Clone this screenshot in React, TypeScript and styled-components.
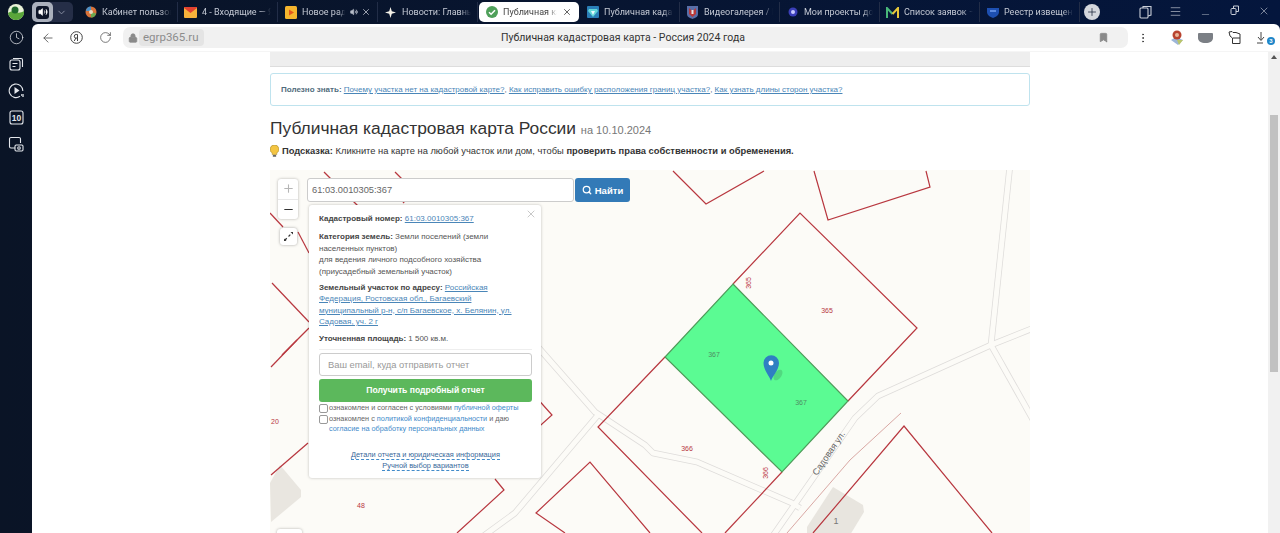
import React from 'react';
import styled, { createGlobalStyle } from 'styled-components';
import { ArrowLeft, Bookmark, ChevronDown, Clock, EllipsisVertical, Menu, Minus, Plus, RotateCw, Search, Volume2, X, Lock } from 'lucide-react';

const GlobalStyle = createGlobalStyle`
  html, body { margin: 0; padding: 0; height: 533px; overflow: hidden; background: #0a1426; }
  body { font-family: "Liberation Sans", Arial, sans-serif; }
  * { box-sizing: border-box; }
`;

// Иконки вкладок
const FavCabinet = () => (
  <svg width="12" height="12" viewBox="0 0 12 12">
    <circle cx="6" cy="6" r="5.5" fill="#d9733a" />
    <path d="M1 5a5 5 0 0 1 5-4.5V5z" fill="#4a90c8" />
    <path d="M6 11.5a5 5 0 0 0 5-4L6 6z" fill="#6aa84f" />
    <circle cx="6" cy="6" r="2" fill="#e8d8c0" />
  </svg>
);
const FavMail = () => (
  <svg width="13" height="11" viewBox="0 0 13 11">
    <rect width="13" height="11" rx="1" fill="#f7b23b" />
    <path d="M0 1l6.5 5L13 1V0H0z" fill="#e2412f" />
  </svg>
);
const FavRadio = () => (
  <svg width="12" height="13" viewBox="0 0 12 13">
    <rect width="12" height="13" rx="1.5" fill="#f5b52e" />
    <path d="M4 3.5l5 3-5 3z" fill="#e2561c" />
  </svg>
);
const FavSpark = () => (
  <svg width="11" height="11" viewBox="0 0 11 11">
    <path d="M5.5 0l1.3 4.2L11 5.5 6.8 6.8 5.5 11 4.2 6.8 0 5.5l4.2-1.3z" fill="#f4f1e8" />
  </svg>
);
const FavOk = () => (
  <svg width="12" height="12" viewBox="0 0 12 12">
    <circle cx="6" cy="6" r="6" fill="#4fa05a" />
    <path d="M3 6.2l2.1 2.1L9 4.2" fill="none" stroke="#fff" strokeWidth="1.5" />
  </svg>
);
const FavGem = () => (
  <svg width="12" height="12" viewBox="0 0 12 12">
    <rect width="12" height="12" rx="1" fill="#2a7fb8" />
    <path d="M2 3h8l1 2-5 6-5-6z" fill="#62d6d8" />
    <path d="M4 5h4L6 9z" fill="#e8fbff" />
  </svg>
);
const FavCrest = () => (
  <svg width="11" height="13" viewBox="0 0 11 13">
    <path d="M0 0h11v8c0 3-3 4-5.5 5C3 12 0 11 0 8z" fill="#5a6fa8" />
    <path d="M2 2l3.5 3L9 2v6L5.5 11 2 8z" fill="#b93a3a" />
    <rect x="4.5" y="4" width="2" height="4" fill="#e8e8e8" />
  </svg>
);
const FavDot = () => (
  <svg width="10" height="10" viewBox="0 0 10 10">
    <circle cx="5" cy="5" r="4.5" fill="#3b3fb8" />
    <circle cx="5" cy="5" r="2" fill="#c9ccff" />
  </svg>
);
const FavM = () => (
  <svg width="13" height="11" viewBox="0 0 13 11">
    <path d="M1 11V1l5.5 6" fill="none" stroke="#49b87a" strokeWidth="2" />
    <path d="M6.5 7L12 1v10" fill="none" stroke="#e6c73a" strokeWidth="2" />
  </svg>
);
const FavShield = () => (
  <svg width="12" height="11" viewBox="0 0 12 11">
    <path d="M0 1h12v4c0 3-3 5-6 6-3-1-6-3-6-6z" fill="#1d4fb0" />
    <path d="M3 3h6v2H3z" fill="#5d8be0" />
  </svg>
);

const tabs = [
  { title: 'Кабинет пользов', icon: <FavCabinet />, width: 69 },
  { title: '4 - Входящие — Я', icon: <FavMail />, width: 69 },
  { title: 'Новое ради', icon: <FavRadio />, width: 43, sound: true, close: true },
  { title: 'Новости: Главны', icon: <FavSpark />, width: 69 },
  { title: 'Публичная кад', icon: <FavOk />, width: 54, active: true, close: true },
  { title: 'Публичная када', icon: <FavGem />, width: 69 },
  { title: 'Видеогалерея / N', icon: <FavCrest />, width: 69 },
  { title: 'Мои проекты до', icon: <FavDot />, width: 69 },
  { title: 'Список заявок –', icon: <FavM />, width: 69 },
  { title: 'Реестр извещен', icon: <FavShield />, width: 69 },
];

const Desktop = styled.div`
  display: flex;
  width: 1280px;
  height: 533px;
  overflow: hidden;
  background: linear-gradient(to right, #0a1426, #04163d);
`;

const Sidebar = styled.aside`
  width: 32px;
  flex: none;
  display: flex;
  flex-direction: column;
  align-items: center;
  padding-top: 4px;
  color: #e4e7ec;
`;

const SideLogo = styled.div`
  height: 16px;
  margin-bottom: 4px;
  display: flex;
`;

const SideSlot = styled.div`
  height: 26.75px;
  display: flex;
  align-items: center;
  justify-content: center;
`;

const Window = styled.div`
  flex: 1;
  min-width: 0;
  display: flex;
  flex-direction: column;
`;

const TabStrip = styled.div`
  height: 24px;
  flex: none;
  display: flex;
  align-items: center;
`;

const AudioGroup = styled.div`
  width: 41px;
  height: 20px;
  margin-right: 5px;
  display: flex;
  border-radius: 5px;
  background: #252e47;
  color: #8d94a6;
  align-items: center;
`;

const AudioButton = styled.div`
  width: 21px;
  height: 20px;
  border-radius: 5px;
  background: #aab0bc;
  display: flex;
  align-items: center;
  justify-content: center;
  margin-right: 3px;
`;

const AudioIcon = styled.div`
  width: 13px;
  height: 13px;
  border-radius: 3px;
  background: #0d1528;
  color: #fff;
  display: flex;
  align-items: center;
  justify-content: center;
`;

const Tab = styled.div<{ $active?: boolean }>`
  width: 100px;
  height: 20px;
  flex: none;
  display: flex;
  align-items: center;
  padding-left: 6px;
  gap: 5px;
  font-family: Roboto, "Liberation Sans", sans-serif;
  font-size: 9px;
  color: ${({ $active }) => ($active ? '#444' : '#c4c9d4')};
  background: ${({ $active }) => ($active ? '#fff' : 'transparent')};
  border-radius: ${({ $active }) => ($active ? '5px' : '0')};
  margin: ${({ $active }) => ($active ? '0 1px' : '0')};
  border-right: ${({ $active }) => ($active ? 'none' : '1px solid #222d47')};
`;

const TabIcon = styled.span`
  width: 13px;
  flex: none;
  display: flex;
  align-items: center;
  justify-content: center;
`;

const TabTitle = styled.span<{ $w: number }>`
  flex: 0 0 ${({ $w }) => $w}px;
  overflow: hidden;
  white-space: nowrap;
  -webkit-mask-image: linear-gradient(to right, #000 85%, transparent);
  mask-image: linear-gradient(to right, #000 85%, transparent);
`;

const TabActions = styled.span`
  display: flex;
  align-items: center;
  gap: 3px;
  color: #b8bdc8;
`;

const NewTab = styled.div`
  width: 16px;
  height: 16px;
  border-radius: 50%;
  background: #d4d7dd;
  color: #1a2338;
  display: flex;
  align-items: center;
  justify-content: center;
  margin-left: 4px;
`;

const WindowControls = styled.div`
  margin-left: auto;
  display: flex;
  color: #c9ced8;
  padding-right: 1px;
`;

const ControlSlot = styled.div<{ $low?: boolean }>`
  width: 29.5px;
  display: flex;
  justify-content: center;
  padding-top: ${({ $low }) => ($low ? '4px' : '0')};
`;

const Main = styled.main`
  flex: 1;
  min-height: 0;
  background: #fff;
  border-radius: 6px 6px 0 0;
  display: flex;
  flex-direction: column;
`;

const Toolbar = styled.div`
  height: 27px;
  flex: none;
  display: flex;
  align-items: center;
  color: #444;
`;

const NavSlot = styled.div`
  width: 29px;
  display: flex;
  justify-content: center;
  flex: none;
`;

const NavGroup = styled.div`
  display: flex;
  padding-left: 1px;
  width: 91px;
  flex: none;
`;

const AddressBar = styled.div`
  width: 1005px;
  height: 21px;
  flex: none;
  background: #f1f1f1;
  border-radius: 7px;
  display: flex;
  align-items: center;
`;

const SiteChip = styled.div`
  width: 85px;
  flex: none;
  display: flex;
  align-items: center;
  padding-left: 5px;
  color: #8a8a8a;
`;

const Domain = styled.span`
  background: #e4e4e4;
  color: #8c8c8c;
  border-radius: 4px;
  padding: 2px 5px 2px 4px;
  margin-left: 1px;
  font: 11.5px Roboto, sans-serif;
  line-height: 13px;
`;

const PageTitle = styled.div`
  flex: 1;
  text-align: center;
  font: 10.5px Roboto, sans-serif;
  color: #333;
`;

const BookmarkSlot = styled.div`
  width: 90px;
  flex: none;
  padding-left: 60px;
  color: #8a8a8a;
  display: flex;
`;

const Extensions = styled.div`
  flex: 1;
  display: flex;
  align-items: center;
  padding-left: 6px;
`;

const ExtSlot = styled.div<{ $w?: number }>`
  width: ${({ $w }) => $w ?? 29}px;
  display: flex;
  justify-content: center;
  position: relative;
`;

const Badge = styled.span`
  position: absolute;
  right: 3px;
  top: 6px;
  width: 8px;
  height: 8px;
  border-radius: 50%;
  background: #1f86c9;
  color: #fff;
  font: bold 6px/8px "Liberation Sans", sans-serif;
  text-align: center;
`;

const ViewRow = styled.div`
  flex: 1;
  min-height: 0;
  display: flex;
  border-top: 1px solid #f5f5f5;
`;

const Viewport = styled.div`
  flex: 1;
  min-width: 0;
  overflow: hidden;
`;

const Scrollbar = styled.div`
  width: 12px;
  flex: none;
  background: #f1f1f1;
  display: flex;
  flex-direction: column;
  align-items: center;
`;

const ScrollArrow = styled.div`
  margin-top: 3px;
  width: 0;
  height: 0;
  border-left: 3px solid transparent;
  border-right: 3px solid transparent;
  border-bottom: 4px solid #555;
`;

const ScrollThumb = styled.div`
  margin-top: 56px;
  width: 8px;
  height: 257px;
  background: #c1c1c1;
`;

const Content = styled.div`
  width: 760px;
  margin: 0 auto;
`;

const TopStrip = styled.div`
  height: 15px;
  background: #eeeeee;
  border-bottom: 1px solid #ddd;
`;

const Notice = styled.div`
  margin-top: 6px;
  height: 33px;
  border: 1px solid #bfe3ee;
  border-radius: 3px;
  padding: 0 10px;
  display: flex;
  align-items: center;
  font-size: 8px;
  color: #4f6b7c;
  white-space: pre;
`;

const TextLink = styled.a`
  color: #4a86b8;
  text-decoration: underline;
`;

const Heading = styled.h1`
  margin: 12px 0 0;
  height: 20px;
  font-size: 17.4px;
  line-height: 20px;
  font-weight: 400;
  color: #333;
  white-space: nowrap;
`;

const HeadingNote = styled.small`
  font-size: 11px;
  color: #777;
`;

const Hint = styled.p`
  margin: 6px 0 0;
  height: 14px;
  display: flex;
  align-items: center;
  gap: 3px;
  font-size: 9.35px;
  color: #333;
  white-space: pre;
`;

const MapBox = styled.div`
  position: relative;
  margin-top: 12px;
  height: 363px;
  overflow: hidden;
  background: #fcfbf7;
`;

const MapSvg = styled.svg`
  display: block;
`;

const ZoomBox = styled.div`
  position: absolute;
  left: 8px;
  top: 9px;
  width: 20px;
  height: 40px;
  background: #fff;
  border-radius: 3px;
  box-shadow: 0 0 3px rgba(0, 0, 0, 0.3);
  display: flex;
  flex-direction: column;
`;

const ZoomButton = styled.div<{ $muted?: boolean }>`
  flex: 1;
  display: flex;
  align-items: center;
  justify-content: center;
  color: ${({ $muted }) => ($muted ? '#b5b5b5' : '#333')};
  & + & { border-top: 1px solid #e8e8e8; }
`;

const ExpandButton = styled.div`
  position: absolute;
  left: 10px;
  top: 58px;
  width: 17px;
  height: 17px;
  background: #fff;
  border-radius: 3px;
  box-shadow: 0 0 3px rgba(0, 0, 0, 0.35);
  display: flex;
  align-items: center;
  justify-content: center;
`;

const SearchForm = styled.div`
  position: absolute;
  left: 37px;
  top: 8px;
  display: flex;
  gap: 1px;
`;

const SearchField = styled.div`
  width: 267px;
  height: 24px;
  background: #fff;
  border: 1px solid #ccc;
  border-radius: 3px;
  padding-left: 4px;
  font-size: 9.3px;
  line-height: 22px;
  color: #666;
`;

const SearchButton = styled.div`
  width: 55px;
  height: 24px;
  background: #337ab7;
  border-radius: 3px;
  color: #fff;
  font-size: 9.5px;
  font-weight: bold;
  display: flex;
  align-items: center;
  justify-content: center;
  gap: 3px;
`;

const SmallPlate = styled.div`
  position: absolute;
  left: 7px;
  top: 359px;
  width: 25px;
  height: 20px;
  background: #fff;
  border-radius: 3px;
  box-shadow: 0 0 3px rgba(0, 0, 0, 0.3);
`;

const Popup = styled.div`
  position: absolute;
  left: 39px;
  top: 35px;
  width: 232px;
  height: 273px;
  background: #fff;
  border-radius: 3px;
  box-shadow: 0 0 3px rgba(0, 0, 0, 0.25);
  padding: 8px 9px 0 10px;
  font-size: 8px;
  line-height: 11.5px;
  color: #555;
`;

const PopupClose = styled.div`
  position: absolute;
  right: 4px;
  top: 3px;
  color: #b5b5b5;
`;

const Para = styled.p<{ $gap: number }>`
  margin: 0 0 ${({ $gap }) => $gap}px;
`;

const Strong = styled.b`
  color: #444;
`;

const Divider = styled.div`
  height: 1px;
  background: #eee;
  margin: 5px 0 3px;
`;

const EmailInput = styled.div`
  height: 23px;
  border: 1px solid #ccc;
  border-radius: 3px;
  padding-left: 8px;
  font-size: 9.4px;
  line-height: 21px;
  color: #999;
`;

const ReportButton = styled.div`
  margin-top: 3px;
  height: 23px;
  background: #5cb85c;
  border-radius: 3px;
  color: #fff;
  font-size: 8.6px;
  font-weight: bold;
  line-height: 23px;
  text-align: center;
`;

const CheckRow = styled.div`
  display: flex;
  gap: 1px;
  font-size: 7.3px;
  line-height: 10px;
  margin-top: 1px;
  color: #666;
  &:first-of-type { margin-top: 2px; }
`;

const CheckBox = styled.span`
  width: 9px;
  height: 9px;
  flex: none;
  background: #fff;
  border: 1px solid #999;
  border-radius: 2px;
  margin-top: 1px;
`;

const PlainLink = styled.span`
  color: #428bca;
`;

const FooterLinks = styled.div`
  margin-top: 15px;
  text-align: center;
  font-size: 7.4px;
  line-height: 11px;
`;

const DashLink = styled.div`
  color: #37689a;
  span { border-bottom: 1px dashed #428bca; }
`;

const roads = [
  '1010,165 991,345',
  '1036,327 991,345 878,396 855,418 770,540',
  '991,345 1036,425',
  '530,338 595,412 645,445 653,453 697,462 792,503 800,508',
  '598,415 515,513 478,540',
];

const parcels = [
  '733,284 800,213 917,328 848,401',
  '673,171 706,204 764,171',
  '814,171 828,220 930,187 926,171',
  '665,357 598,427 702,533',
  '782,472 725,533',
  '813,533 904,426 992,533',
  '535,396 552,415 532,433',
  '495,479 504,490 457,533',
  '650,533 590,462 536,513 565,533',
  '271,367 297,340',
  '271,475 308,443',
  '272,283 309,322',
  '282,355 309,328',
  '298,232 309,253',
  '270,213 283,227',
  '324,172 360,208',
  '395,172 411,188',
  '403,203 425,180',
];

const RED = '#b8373f';

const MapDrawing = () => (
  <MapSvg width="760" height="363" viewBox="270 170 760 363">
    <rect x="270" y="170" width="760" height="363" fill="#fcfbf7" />
    <polygon points="270,483 280,465 301,490 301,497 271,522" fill="#e9e6e0" />
    <polygon points="833,487 863,505 864,512 847,540 807,540 807,527" fill="#e8e5df" />
    <g fill="none" strokeLinejoin="round">
      {roads.map((p) => <polyline key={p} points={p} stroke="#dedcda" strokeWidth="6.5" />)}
      {roads.map((p) => <polyline key={p + 'i'} points={p} stroke="#fcfbf7" strokeWidth="5" />)}
    </g>
    <polyline points="901,413 850,460 787,533" fill="none" stroke="#d9a8a4" strokeWidth="1" />
    <polygon points="733,284 848,401 782,472 665,357" fill="#5bfb93" />
    {parcels.map((p) => (
      <polyline key={p} points={p} fill="none" stroke={RED} strokeWidth="1.2" />
    ))}
    <polygon points="733,284 848,401 782,472 665,357" fill="none" stroke="#4f9a5a" strokeWidth="1.2" />
    <g fontFamily="Liberation Sans, sans-serif" fontSize="7" fill={RED} textAnchor="middle">
      <text x="827" y="313">365</text>
      <text x="687" y="451">366</text>
      <text transform="translate(751 283) rotate(-90)">365</text>
      <text transform="translate(768 473) rotate(-90)">366</text>
      <text x="275" y="424">20</text>
      <text x="361" y="508">48</text>
      <text x="714" y="357" fill="#4f8f63">367</text>
      <text x="801" y="405" fill="#4f8f63">367</text>
    </g>
    <text transform="translate(817 476) rotate(-56)" fontFamily="Liberation Sans, sans-serif" fontSize="9" fill="#666">Садовая ул.</text>
    <text x="836" y="524" fontFamily="Liberation Sans, sans-serif" fontSize="9" fill="#777" textAnchor="middle">1</text>
    {/* маркер участка */}
    <ellipse cx="778" cy="375" rx="3.5" ry="6" fill="#3c8a55" opacity="0.3" transform="rotate(35 778 375)" />
    <path d="M771 381c-1.5-5-7.5-11-7.5-18a7.5 7.5 0 0 1 15.5 0c0 7-6.5 13-8 18z" fill="#2f7fc2" />
    <circle cx="771" cy="363" r="2.5" fill="#fff" />
  </MapSvg>
);

const NoteIcon = () => (
  <svg width="16" height="16" viewBox="0 0 16 16" fill="none" stroke="currentColor" strokeWidth="1.1">
    <rect x="2" y="4" width="10" height="10" rx="2" />
    <path d="M5 2.5h8a1.5 1.5 0 0 1 1.5 1.5v7" />
    <path d="M4.5 7.5h5M4.5 10.5h3" />
  </svg>
);
const PlayIcon = () => (
  <svg width="17" height="17" viewBox="0 0 17 17" fill="none" stroke="currentColor" strokeWidth="1.1">
    <path d="M12 14.3A6.8 6.8 0 1 1 14.8 9" />
    <path d="M6.5 5l5 3.5-5 3.5z" fill="currentColor" stroke="none" />
    <path d="M13 13h1M15 12v3" strokeWidth="1.3" />
  </svg>
);
const TenIcon = () => (
  <svg width="15" height="15" viewBox="0 0 15 15" fill="none" stroke="currentColor" strokeWidth="1.1">
    <rect x="1" y="1" width="13" height="13" rx="2" />
    <text x="7.5" y="11" textAnchor="middle" fontSize="8.5" fontWeight="bold" fill="currentColor" stroke="none" fontFamily="Liberation Sans, sans-serif">10</text>
  </svg>
);
const ShotIcon = () => (
  <svg width="16" height="16" viewBox="0 0 16 16" fill="none" stroke="currentColor" strokeWidth="1.1">
    <path d="M7 12H3a1.5 1.5 0 0 1-1.5-1.5V3A1.5 1.5 0 0 1 3 1.5h8A1.5 1.5 0 0 1 12.5 3v4" />
    <rect x="7" y="9" width="8" height="6" rx="1.2" />
    <circle cx="11" cy="12" r="1.3" />
  </svg>
);
const BrowserLogo = () => (
  <svg width="16" height="16" viewBox="0 0 16 16">
    <circle cx="8" cy="8" r="8" fill="#e9f2d8" />
    <path d="M0 9c3-2 6-2 8-1s5 1 8-1a8 8 0 0 1-16 2z" fill="#5aa63a" />
    <circle cx="7" cy="6" r="3.5" fill="#1f6a2c" />
  </svg>
);
const YandexIcon = () => (
  <svg width="13" height="13" viewBox="0 0 13 13" fill="none" stroke="#444" strokeWidth="1">
    <circle cx="6.5" cy="6.5" r="5.8" />
    <path d="M7.5 10V3.5H6.2a1.8 1.8 0 0 0-.3 3.6L7.5 7M5.8 7L4.3 10" />
  </svg>
);
const TabsIcon = () => (
  <svg width="14" height="14" viewBox="0 0 14 14" fill="none" stroke="currentColor" strokeWidth="1.1">
    <rect x="1" y="3" width="8" height="10" rx="1" />
    <path d="M4 3V1.5h8V10l-3 1" />
  </svg>
);
const RestoreIcon = () => (
  <svg width="10" height="10" viewBox="0 0 10 10" fill="none" stroke="currentColor" strokeWidth="1">
    <rect x="1" y="3.5" width="5" height="6" rx="1" />
    <path d="M3.5 3.5V1h5v5.5H6" />
  </svg>
);
const MapExt = () => (
  <svg width="14" height="16" viewBox="0 0 14 16">
    <path d="M1 10l5-3 7 3-5 5z" fill="#9db6d8" />
    <path d="M7 10l6 0-4 5z" fill="#b9c46a" />
    <circle cx="7" cy="5" r="4.5" fill="#b8432f" />
    <circle cx="7" cy="5" r="2" fill="#e8b59a" />
  </svg>
);
const GreyExt = () => (
  <svg width="15" height="10" viewBox="0 0 15 10">
    <path d="M0 1a1 1 0 0 1 1-1h13a1 1 0 0 1 1 1v4c0 3-3 5-7.5 5S0 8 0 5z" fill="#7b7f85" />
  </svg>
);
const ShirtExt = () => (
  <svg width="13" height="14" viewBox="0 0 13 14" fill="none" stroke="#333" strokeWidth="1">
    <path d="M1 1l3-.5 1 1h3L12 3v9.5H4.5V7L2 5z" />
    <path d="M5 7h7" />
  </svg>
);
const DownloadExt = () => (
  <svg width="14" height="14" viewBox="0 0 14 14" fill="none" stroke="#444" strokeWidth="1">
    <path d="M4 1v8M1 6l3 3.5L7 6" />
    <path d="M0 12h6" />
  </svg>
);
const Bulb = () => (
  <svg width="9" height="12" viewBox="0 0 9 12">
    <path d="M4.5 0a4.3 4.3 0 0 1 2.3 8v1.5H2.2V8A4.3 4.3 0 0 1 4.5 0z" fill="#f4c542" stroke="#a88a2c" strokeWidth="0.6" />
    <rect x="2.8" y="10" width="3.4" height="1.8" rx="0.6" fill="#666" />
  </svg>
);
const ExpandIcon = () => (
  <svg width="11" height="11" viewBox="0 0 11 11" fill="none" stroke="#333" strokeWidth="1.2">
    <path d="M2 9l7-7" strokeDasharray="2.5 2.5" />
    <path d="M1 10V7.5L3.5 10zM10 1v2.5L7.5 1z" fill="#333" stroke="none" />
  </svg>
);

export default function App() {
  return (
    <>
      <GlobalStyle />
      <Desktop>
        <Sidebar>
          <SideLogo><BrowserLogo /></SideLogo>
          <SideSlot><Clock size={15} strokeWidth={1.2} /></SideSlot>
          <SideSlot><NoteIcon /></SideSlot>
          <SideSlot><PlayIcon /></SideSlot>
          <SideSlot><TenIcon /></SideSlot>
          <SideSlot><ShotIcon /></SideSlot>
        </Sidebar>
        <Window>
          <TabStrip>
            <AudioGroup>
              <AudioButton><AudioIcon><Volume2 size={10} fill="#fff" strokeWidth={1.5} /></AudioIcon></AudioButton>
              <ChevronDown size={11} />
            </AudioGroup>
            {tabs.map((t) => (
              <Tab key={t.title} $active={t.active}>
                <TabIcon>{t.icon}</TabIcon>
                <TabTitle $w={t.width}>{t.title}</TabTitle>
                {t.close && (
                  <TabActions>
                    {t.sound && <Volume2 size={8} fill="#b8bdc8" />}
                    <X size={10} color={t.active ? '#444' : '#b8bdc8'} />
                  </TabActions>
                )}
              </Tab>
            ))}
            <NewTab><Plus size={12} strokeWidth={1.5} /></NewTab>
            <WindowControls>
              <ControlSlot><TabsIcon /></ControlSlot>
              <ControlSlot><Menu size={13} strokeWidth={1.2} /></ControlSlot>
              <ControlSlot $low><Minus size={11} strokeWidth={1} /></ControlSlot>
              <ControlSlot><RestoreIcon /></ControlSlot>
              <ControlSlot><X size={12} strokeWidth={1.2} /></ControlSlot>
            </WindowControls>
          </TabStrip>
          <Main>
            <Toolbar>
              <NavGroup>
                <NavSlot><ArrowLeft size={14} strokeWidth={1.3} /></NavSlot>
                <NavSlot><YandexIcon /></NavSlot>
                <NavSlot><RotateCw size={13} strokeWidth={1.3} /></NavSlot>
              </NavGroup>
              <AddressBar>
                <SiteChip>
                  <Lock size={10} fill="#8a8a8a" />
                  <Domain>egrp365.ru</Domain>
                </SiteChip>
                <PageTitle>Публичная кадастровая карта - Россия 2024 года</PageTitle>
                <BookmarkSlot><Bookmark size={11} fill="#8a8a8a" /></BookmarkSlot>
              </AddressBar>
              <Extensions>
                <ExtSlot $w={18}><EllipsisVertical size={12} /></ExtSlot>
                <ExtSlot $w={10} />
                <ExtSlot><MapExt /></ExtSlot>
                <ExtSlot><GreyExt /></ExtSlot>
                <ExtSlot><ShirtExt /></ExtSlot>
                <ExtSlot><DownloadExt /><Badge>3</Badge></ExtSlot>
              </Extensions>
            </Toolbar>
            <ViewRow>
              <Viewport>
                <Content>
                  <TopStrip />
                  <Notice>
                    <b>Полезно знать: </b>
                    <TextLink>Почему участка нет на кадастровой карте?</TextLink>,{' '}
                    <TextLink>Как исправить ошибку расположения границ участка?</TextLink>,{' '}
                    <TextLink>Как узнать длины сторон участка?</TextLink>
                  </Notice>
                  <Heading>Публичная кадастровая карта России <HeadingNote>на 10.10.2024</HeadingNote></Heading>
                  <Hint>
                    <Bulb />
                    <span><b>Подсказка:</b> Кликните на карте на любой участок или дом, чтобы <b>проверить права собственности и обременения.</b></span>
                  </Hint>
                  <MapBox>
                    <MapDrawing />
                    <ZoomBox>
                      <ZoomButton $muted><Plus size={13} /></ZoomButton>
                      <ZoomButton><Minus size={13} /></ZoomButton>
                    </ZoomBox>
                    <ExpandButton><ExpandIcon /></ExpandButton>
                    <SearchForm>
                      <SearchField>61:03.0010305:367</SearchField>
                      <SearchButton><Search size={10} strokeWidth={3} />Найти</SearchButton>
                    </SearchForm>
                    <SmallPlate />
                    <Popup>
                      <PopupClose><X size={12} strokeWidth={1.5} /></PopupClose>
                      <Para $gap={6.5}><Strong>Кадастровый номер:</Strong> <TextLink>61:03.0010305:367</TextLink></Para>
                      <Para $gap={4.5}><Strong>Категория земель:</Strong> Земли поселений (земли населенных пунктов)<br />для ведения личного подсобного хозяйства (приусадебный земельный участок)</Para>
                      <Para $gap={5}><Strong>Земельный участок по адресу:</Strong> <TextLink>Российская Федерация, Ростовская обл., Багаевский муниципальный р-н, с/п Багаевское, х. Белянин, ул. Садовая, уч. 2 г</TextLink></Para>
                      <Para $gap={0}><Strong>Уточненная площадь:</Strong> 1 500 кв.м.</Para>
                      <Divider />
                      <EmailInput>Ваш email, куда отправить отчет</EmailInput>
                      <ReportButton>Получить подробный отчет</ReportButton>
                      <CheckRow><CheckBox /><span>ознакомлен и согласен с условиями <PlainLink>публичной оферты</PlainLink></span></CheckRow>
                      <CheckRow><CheckBox /><span>ознакомлен с <PlainLink>политикой конфиденциальности</PlainLink> и даю <PlainLink>согласие на обработку персональных данных</PlainLink></span></CheckRow>
                      <FooterLinks>
                        <DashLink><span>Детали отчета и юридическая информация</span></DashLink>
                        <DashLink><span>Ручной выбор вариантов</span></DashLink>
                      </FooterLinks>
                    </Popup>
                  </MapBox>
                </Content>
              </Viewport>
              <Scrollbar>
                <ScrollArrow />
                <ScrollThumb />
              </Scrollbar>
            </ViewRow>
          </Main>
        </Window>
      </Desktop>
    </>
  );
}
